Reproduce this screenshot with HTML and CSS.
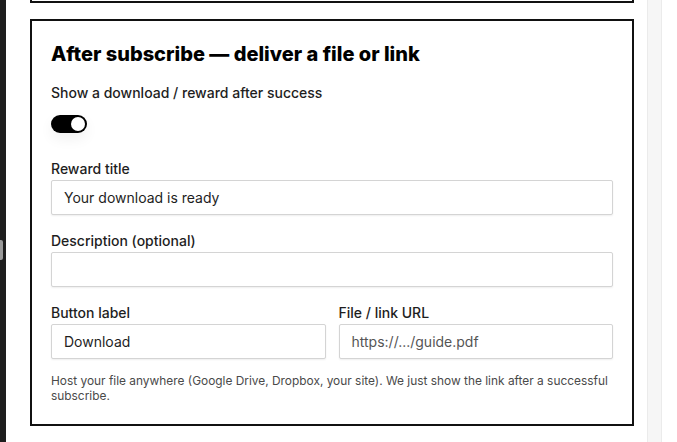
FILE: index.html
```html
<!DOCTYPE html>
<html lang="en">
<head>
<meta charset="utf-8">
<title>After subscribe</title>
<link rel="stylesheet" href="styles.css">
</head>
<body>
<div class="sidebar"><div class="thumb"></div></div>
<main class="main">
  <section class="card card-prev"></section>
  <section class="card">
    <h2 class="card-title">After subscribe — deliver a file or link</h2>
    <div class="toggle-row">
      <span class="label">Show a download / reward after success</span>
      <span class="toggle" role="switch" aria-checked="true"><span class="knob"></span></span>
    </div>
    <div class="fields">
      <label class="field">
        <span class="label">Reward title</span>
        <span class="input">Your download is ready</span>
      </label>
      <label class="field">
        <span class="label">Description (optional)</span>
        <span class="input"></span>
      </label>
      <div class="row">
        <label class="field">
          <span class="label">Button label</span>
          <span class="input">Download</span>
        </label>
        <label class="field">
          <span class="label">File / link URL</span>
          <span class="input placeholder">https://.../guide.pdf</span>
        </label>
      </div>
    </div>
    <p class="help">Host your file anywhere (Google Drive, Dropbox, your site). We just show the link after a successful subscribe.</p>
  </section>
  <section class="card card-next"></section>
</main>
<aside class="rail"></aside>
</body>
</html>
```

FILE: styles.css
```css
* { box-sizing: border-box; }

html, body {
  margin: 0;
  height: 442px;
  overflow: hidden;
  background: #fff;
}

body {
  display: flex;
  font-family: Inter, "Noto Sans", "Liberation Sans", sans-serif;
  color: #1e1e1e;
}

.sidebar {
  position: relative;
  width: 6px;
  flex: none;
  background: #1e1e1e;
}

.thumb {
  position: absolute;
  left: 0;
  top: 240px;
  width: 3px;
  height: 20px;
  background: #9a9a9a;
  border-radius: 0 2px 2px 0;
}

.main {
  width: 628px;
  flex: none;
  padding-left: 24px;
  display: flex;
  flex-direction: column;
  gap: 16px;
}

.card {
  width: 604px;
  flex: none;
  border: 2px solid #111;
  background: #fff;
  padding: 19px 19px 21px;
}

.card-prev {
  height: 43px;
  margin-top: -41px;
}

.card-next {
  height: 60px;
}

.card-title {
  margin: 0 0 16px;
  font-size: 20px;
  line-height: 28px;
  font-weight: 800;
  letter-spacing: 0;
  color: #000;
}

.toggle-row {
  display: flex;
  flex-direction: column;
  align-items: flex-start;
  gap: 14px;
}

.label {
  display: block;
  font-size: 14px;
  line-height: 16px;
  font-weight: 500;
  color: #1e1e1e;
}

.toggle-row .label { line-height: 17px; }

.toggle {
  display: flex;
  justify-content: flex-end;
  align-items: center;
  width: 36px;
  height: 18px;
  padding: 2px;
  border-radius: 9px;
  background: #000;
  box-shadow: 0 6px 14px rgba(0, 0, 0, 0.06);
}

.knob {
  width: 14px;
  height: 14px;
  border-radius: 50%;
  background: #fff;
}

.fields {
  margin-top: 28px;
  display: flex;
  flex-direction: column;
  gap: 18px;
}

.field {
  display: flex;
  flex-direction: column;
  gap: 3px;
}

.input {
  display: flex;
  align-items: center;
  height: 35px;
  padding: 0 12px;
  border: 1px solid #d4d4d4;
  border-radius: 2px;
  box-shadow: 0 1px 2px rgba(0, 0, 0, 0.07);
  font-size: 14px;
  color: #1e1e1e;
  background: #fff;
}

.placeholder { color: #555; }

.row {
  display: grid;
  grid-template-columns: 1fr 1fr;
  gap: 13px;
}

.help {
  margin: 14px 0 0;
  font-size: 11.9px;
  line-height: 15px;
  color: #4a4a4a;
}

.rail {
  width: 15px;
  flex: none;
  margin-left: 13px;
  background: #f6f6f6;
  border-left: 1px solid #ebebeb;
  border-right: 1px solid #ebebeb;
}
```
